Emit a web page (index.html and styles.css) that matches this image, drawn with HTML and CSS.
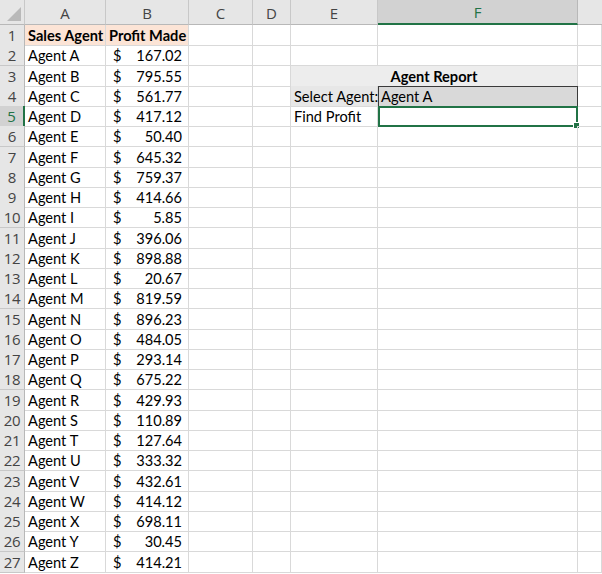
FILE: index.html
```html
<!DOCTYPE html>
<html>
<head>
<meta charset="utf-8">
<link rel="stylesheet" href="styles.css">
</head>
<body>
<div class="sheet">
  <div class="row head">
    <div class="corner"><span class="tri"></span></div>
    <div class="ch">A</div><div class="ch">B</div><div class="ch">C</div><div class="ch">D</div><div class="ch">E</div><div class="ch sel">F</div><div class="ch last"></div>
  </div>
  <div class="row"><div class="rh">1</div><div class="c hd">Sales Agent</div><div class="c hd">Profit Made</div><div class="c"></div><div class="c"></div><div class="c"></div><div class="c"></div><div class="c"></div></div>
  <div class="row"><div class="rh">2</div><div class="c">Agent A</div><div class="c acc"><span>$</span><span>167.02</span></div><div class="c"></div><div class="c"></div><div class="c"></div><div class="c"></div><div class="c"></div></div>
  <div class="row"><div class="rh">3</div><div class="c">Agent B</div><div class="c acc"><span>$</span><span>795.55</span></div><div class="c"></div><div class="c"></div><div class="c title">Agent Report</div><div class="c"></div></div>
  <div class="row"><div class="rh">4</div><div class="c">Agent C</div><div class="c acc"><span>$</span><span>561.77</span></div><div class="c"></div><div class="c"></div><div class="c lbl">Select Agent:</div><div class="c pick">Agent A</div><div class="c"></div></div>
  <div class="row"><div class="rh rsel">5</div><div class="c">Agent D</div><div class="c acc"><span>$</span><span>417.12</span></div><div class="c"></div><div class="c"></div><div class="c">Find Profit</div><div class="c active"><span class="handle"></span></div><div class="c"></div></div>
  <div class="row"><div class="rh">6</div><div class="c">Agent E</div><div class="c acc"><span>$</span><span>50.40</span></div><div class="c"></div><div class="c"></div><div class="c"></div><div class="c"></div><div class="c"></div></div>
  <div class="row"><div class="rh">7</div><div class="c">Agent F</div><div class="c acc"><span>$</span><span>645.32</span></div><div class="c"></div><div class="c"></div><div class="c"></div><div class="c"></div><div class="c"></div></div>
  <div class="row"><div class="rh">8</div><div class="c">Agent G</div><div class="c acc"><span>$</span><span>759.37</span></div><div class="c"></div><div class="c"></div><div class="c"></div><div class="c"></div><div class="c"></div></div>
  <div class="row"><div class="rh">9</div><div class="c">Agent H</div><div class="c acc"><span>$</span><span>414.66</span></div><div class="c"></div><div class="c"></div><div class="c"></div><div class="c"></div><div class="c"></div></div>
  <div class="row"><div class="rh">10</div><div class="c">Agent I</div><div class="c acc"><span>$</span><span>5.85</span></div><div class="c"></div><div class="c"></div><div class="c"></div><div class="c"></div><div class="c"></div></div>
  <div class="row"><div class="rh">11</div><div class="c">Agent J</div><div class="c acc"><span>$</span><span>396.06</span></div><div class="c"></div><div class="c"></div><div class="c"></div><div class="c"></div><div class="c"></div></div>
  <div class="row"><div class="rh">12</div><div class="c">Agent K</div><div class="c acc"><span>$</span><span>898.88</span></div><div class="c"></div><div class="c"></div><div class="c"></div><div class="c"></div><div class="c"></div></div>
  <div class="row"><div class="rh">13</div><div class="c">Agent L</div><div class="c acc"><span>$</span><span>20.67</span></div><div class="c"></div><div class="c"></div><div class="c"></div><div class="c"></div><div class="c"></div></div>
  <div class="row"><div class="rh">14</div><div class="c">Agent M</div><div class="c acc"><span>$</span><span>819.59</span></div><div class="c"></div><div class="c"></div><div class="c"></div><div class="c"></div><div class="c"></div></div>
  <div class="row"><div class="rh">15</div><div class="c">Agent N</div><div class="c acc"><span>$</span><span>896.23</span></div><div class="c"></div><div class="c"></div><div class="c"></div><div class="c"></div><div class="c"></div></div>
  <div class="row"><div class="rh">16</div><div class="c">Agent O</div><div class="c acc"><span>$</span><span>484.05</span></div><div class="c"></div><div class="c"></div><div class="c"></div><div class="c"></div><div class="c"></div></div>
  <div class="row"><div class="rh">17</div><div class="c">Agent P</div><div class="c acc"><span>$</span><span>293.14</span></div><div class="c"></div><div class="c"></div><div class="c"></div><div class="c"></div><div class="c"></div></div>
  <div class="row"><div class="rh">18</div><div class="c">Agent Q</div><div class="c acc"><span>$</span><span>675.22</span></div><div class="c"></div><div class="c"></div><div class="c"></div><div class="c"></div><div class="c"></div></div>
  <div class="row"><div class="rh">19</div><div class="c">Agent R</div><div class="c acc"><span>$</span><span>429.93</span></div><div class="c"></div><div class="c"></div><div class="c"></div><div class="c"></div><div class="c"></div></div>
  <div class="row"><div class="rh">20</div><div class="c">Agent S</div><div class="c acc"><span>$</span><span>110.89</span></div><div class="c"></div><div class="c"></div><div class="c"></div><div class="c"></div><div class="c"></div></div>
  <div class="row"><div class="rh">21</div><div class="c">Agent T</div><div class="c acc"><span>$</span><span>127.64</span></div><div class="c"></div><div class="c"></div><div class="c"></div><div class="c"></div><div class="c"></div></div>
  <div class="row"><div class="rh">22</div><div class="c">Agent U</div><div class="c acc"><span>$</span><span>333.32</span></div><div class="c"></div><div class="c"></div><div class="c"></div><div class="c"></div><div class="c"></div></div>
  <div class="row"><div class="rh">23</div><div class="c">Agent V</div><div class="c acc"><span>$</span><span>432.61</span></div><div class="c"></div><div class="c"></div><div class="c"></div><div class="c"></div><div class="c"></div></div>
  <div class="row"><div class="rh">24</div><div class="c">Agent W</div><div class="c acc"><span>$</span><span>414.12</span></div><div class="c"></div><div class="c"></div><div class="c"></div><div class="c"></div><div class="c"></div></div>
  <div class="row"><div class="rh">25</div><div class="c">Agent X</div><div class="c acc"><span>$</span><span>698.11</span></div><div class="c"></div><div class="c"></div><div class="c"></div><div class="c"></div><div class="c"></div></div>
  <div class="row"><div class="rh">26</div><div class="c">Agent Y</div><div class="c acc"><span>$</span><span>30.45</span></div><div class="c"></div><div class="c"></div><div class="c"></div><div class="c"></div><div class="c"></div></div>
  <div class="row"><div class="rh">27</div><div class="c">Agent Z</div><div class="c acc"><span>$</span><span>414.21</span></div><div class="c"></div><div class="c"></div><div class="c"></div><div class="c"></div><div class="c"></div></div>
</div>
</body>
</html>
```
FILE: styles.css
```css
html, body {
  margin: 0;
  padding: 0;
  background: #ffffff;
}
.sheet {
  width: 602px;
  height: 574px;
  overflow: hidden;
  font-family: Lato, "Open Sans", sans-serif;
  font-size: 14.6px;
  color: #000;
}
.row {
  display: grid;
  grid-template-columns: 25px 81px 83px 64px 38px 87px 200px 1fr;
  height: 20.26px;
}
.row.head {
  height: 25px;
}
.row > div {
  box-sizing: border-box;
  position: relative;
}
.corner {
  background: #e6e6e6;
  border-right: 1px solid #c8c8c8;
  border-bottom: 1px solid #b8b8b8;
}
.tri {
  position: absolute;
  right: 3px;
  bottom: 3px;
  width: 0;
  height: 0;
  border-left: 14px solid transparent;
  border-bottom: 14px solid #b9b9b9;
}
.ch {
  background: #e6e6e6;
  border-right: 1px solid #c8c8c8;
  border-bottom: 1px solid #b8b8b8;
  color: #444;
  font-family: "Open Sans", Lato, sans-serif;
  font-size: 15px;
  display: flex;
  align-items: center;
  justify-content: center;
  padding-top: 1px;
}
.ch.sel {
  background: #d2d2d2;
  color: #217346;
  border-bottom: 2px solid #217346;
  border-right-color: #b8b8b8;
}
.ch.last {
  border-right: none;
}
.rh {
  background: #e6e6e6;
  border-right: 1px solid #b8b8b8;
  border-bottom: 1px solid #c8c8c8;
  color: #444;
  font-family: "Open Sans", Lato, sans-serif;
  font-size: 15px;
  letter-spacing: -0.3px;
  display: flex;
  align-items: center;
  justify-content: center;
}
.rh.rsel {
  background: #d2d2d2;
  color: #217346;
  border-right: 2px solid #217346;
}
.c {
  border-right: 1px solid #d9d9d9;
  border-bottom: 1px solid #d9d9d9;
  display: flex;
  align-items: flex-end;
  padding: 0 3px 0 3px;
  white-space: nowrap;
  line-height: 19px;
}
.c.hd {
  background: #fce4d6;
  font-weight: bold;
}
.c.acc {
  justify-content: space-between;
  padding: 0 6px 0 7px;
}
.c.title {
  grid-column: span 2;
  background: #ededed;
  font-weight: bold;
  justify-content: center;
  border-right-color: #d4d4d4;
}
.c.lbl {
  background: #e7e7e7;
}
.c.pick {
  background: #d9d9d9;
  border: 1px solid #3a3a3a;
  padding-left: 2px;
}
.c.active {
  border: 2px solid #217346;
}
.handle {
  position: absolute;
  right: -4px;
  bottom: -4px;
  width: 5px;
  height: 5px;
  background: #217346;
  border: 1px solid #fff;
}
```
